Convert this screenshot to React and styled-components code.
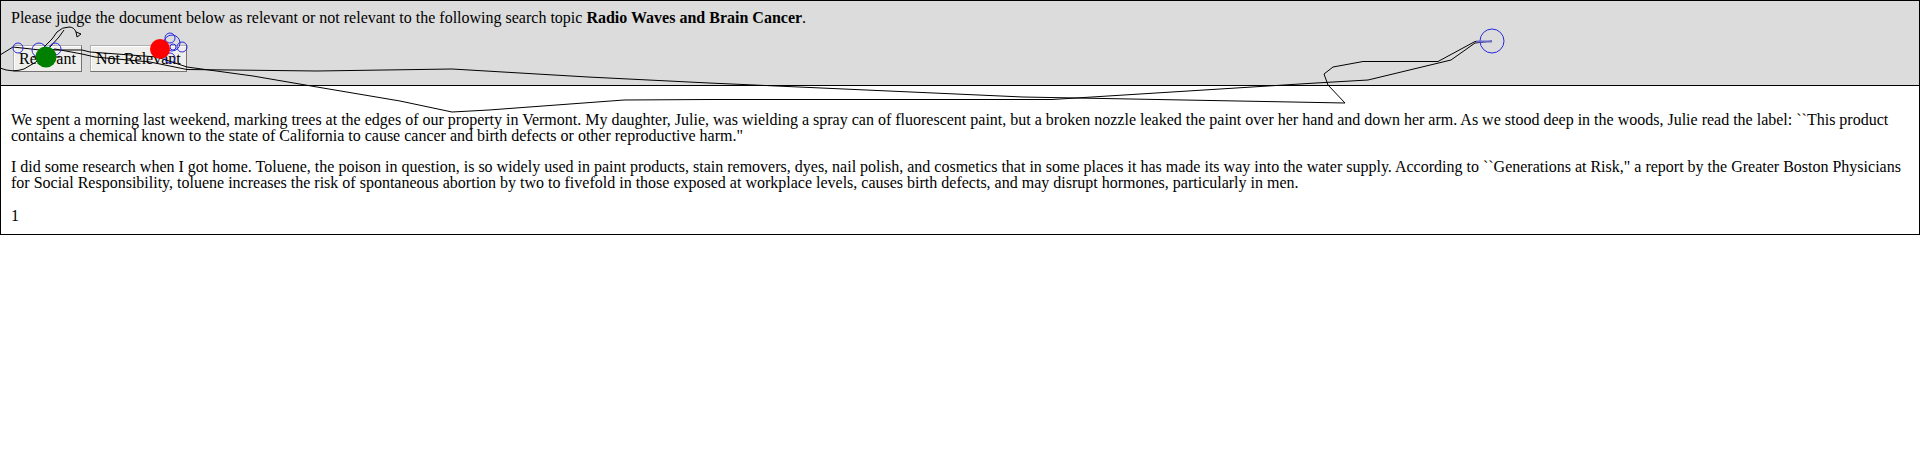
import React from "react";
import styled, { createGlobalStyle } from "styled-components";

const GlobalStyle = createGlobalStyle`
  html, body {
    margin: 0;
    padding: 0;
    background: #ffffff;
  }
  body {
    font-family: "Liberation Serif", "Times New Roman", serif;
    font-size: 16px;
    color: #000000;
  }
  * { box-sizing: border-box; }
`;

const Page = styled.div`
  position: relative;
  width: 1920px;
  height: 475px;
  overflow: hidden;
`;

const Header = styled.header`
  display: flex;
  flex-direction: column;
  gap: 18px;
  background: #dcdcdc;
  border: 1px solid #000000;
  padding: 8px 10px 13px;
`;

const Prompt = styled.div`
  line-height: 18px;
  white-space: nowrap;
`;

const Topic = styled.b`
  font-weight: bold;
`;

const ButtonRow = styled.div`
  display: flex;
  gap: 8px;
  padding-left: 2px;
`;

const JudgeButton = styled.button`
  height: 27px;
  padding: 0 5px;
  font-family: "Liberation Serif", "Times New Roman", serif;
  font-size: 16px;
  line-height: 18px;
  color: #000000;
  background: #efeeea;
  border: 1px solid #b0b0b0;
  border-right-color: #737373;
  border-bottom-color: #737373;
  box-shadow: inset 1px 1px 0 #ffffff;
  border-radius: 0;
`;

const Document = styled.main`
  display: flex;
  flex-direction: column;
  border: 1px solid #000000;
  border-top: none;
  padding: 26px 10px 10px;
`;

const Paragraph = styled.p`
  margin: 0 0 ${(p) => p.$after}px;
  line-height: 16px;
`;

const PageNumber = styled.div`
  line-height: 16px;
`;

const Overlay = styled.svg`
  position: absolute;
  top: 0;
  left: 0;
  pointer-events: none;
`;

const lowerRoute =
  "M 0 55 L 13 47 L 40 50 L 60 50 L 82 50 L 90 52 L 157 57 L 187 67 L 253 76 L 317 87 L 400 101 L 452 112 L 489 110 L 624 100 L 709 99.5 L 1052 99.5 L 1316 83 L 1368 80 L 1451 60 L 1475 43 L 1492 41";

const upperRoute =
  "M 0 68 Q 12 73 24 69 L 36 62 L 46 52 L 55 49 L 82 54 L 95 57 L 150 62 L 187 69.5 L 317 71 L 452 69 L 588 77 L 709 83 L 1023 97 L 1345 103 L 1328 85 L 1324 74 L 1333 67 L 1363 61.5 L 1438 61.5 L 1475 41.5 L 1492 41.5";

const circles = [
  [18, 48, 5],
  [39, 50, 7],
  [55, 49, 6],
  [170, 38, 5],
  [172, 43, 8],
  [173, 47, 3],
  [182, 47, 5],
  [170, 58, 5],
  [1492, 41, 12],
];

function MouseTrace() {
  return (
    <Overlay width="1920" height="475" viewBox="0 0 1920 475">
      <g fill="none" stroke="#000000" strokeWidth="1" strokeLinejoin="round">
        <path d={lowerRoute} />
        <path d={upperRoute} />
        <path d="M 33 57 L 60 57" />
        <path d="M 42 49 L 52 39 L 57 32 Q 62 27 69 27 Q 74 27 76 32" />
        <path d="M 76 32 L 81 34 L 77 37 Z" />
        <path d="M 50 47 L 59 37 L 64 30" />
      </g>
      <g fill="none" stroke="#2a2ae0" strokeWidth="1">
        {circles.map(([cx, cy, r], i) => (
          <circle key={i} cx={cx} cy={cy} r={r} />
        ))}
        <path d="M 1476 41.5 L 1492 41.5" stroke="#6a6acc" strokeWidth="2" />
      </g>
      <circle cx="46" cy="57" r="10.5" fill="#008000" />
      <circle cx="160" cy="49" r="10" fill="#ff0000" />
    </Overlay>
  );
}

export default function App() {
  return (
    <Page>
      <GlobalStyle />
      <Header>
        <Prompt>
          Please judge the document below as relevant or not relevant to the
          following search topic <Topic>Radio Waves and Brain Cancer</Topic>.
        </Prompt>
        <ButtonRow>
          <JudgeButton type="button">Relevant</JudgeButton>
          <JudgeButton type="button">Not Relevant</JudgeButton>
        </ButtonRow>
      </Header>
      <Document>
        <Paragraph $after={15}>
          We spent a morning last weekend, marking trees at the edges of our
          property in Vermont. My daughter, Julie, was wielding a spray can of
          fluorescent paint, but a broken nozzle leaked the paint over her hand
          and down her arm. As we stood deep in the woods, Julie read the label:
          ``This product contains a chemical known to the state of California to
          cause cancer and birth defects or other reproductive harm."
        </Paragraph>
        <Paragraph $after={17}>
          I did some research when I got home. Toluene, the poison in question,
          is so widely used in paint products, stain removers, dyes, nail
          polish, and cosmetics that in some places it has made its way into the
          water supply. According to ``Generations at Risk," a report by the
          Greater Boston Physicians for Social Responsibility, toluene increases
          the risk of spontaneous abortion by two to fivefold in those exposed at
          workplace levels, causes birth defects, and may disrupt hormones,
          particularly in men.
        </Paragraph>
        <PageNumber>1</PageNumber>
      </Document>
      <MouseTrace />
    </Page>
  );
}
